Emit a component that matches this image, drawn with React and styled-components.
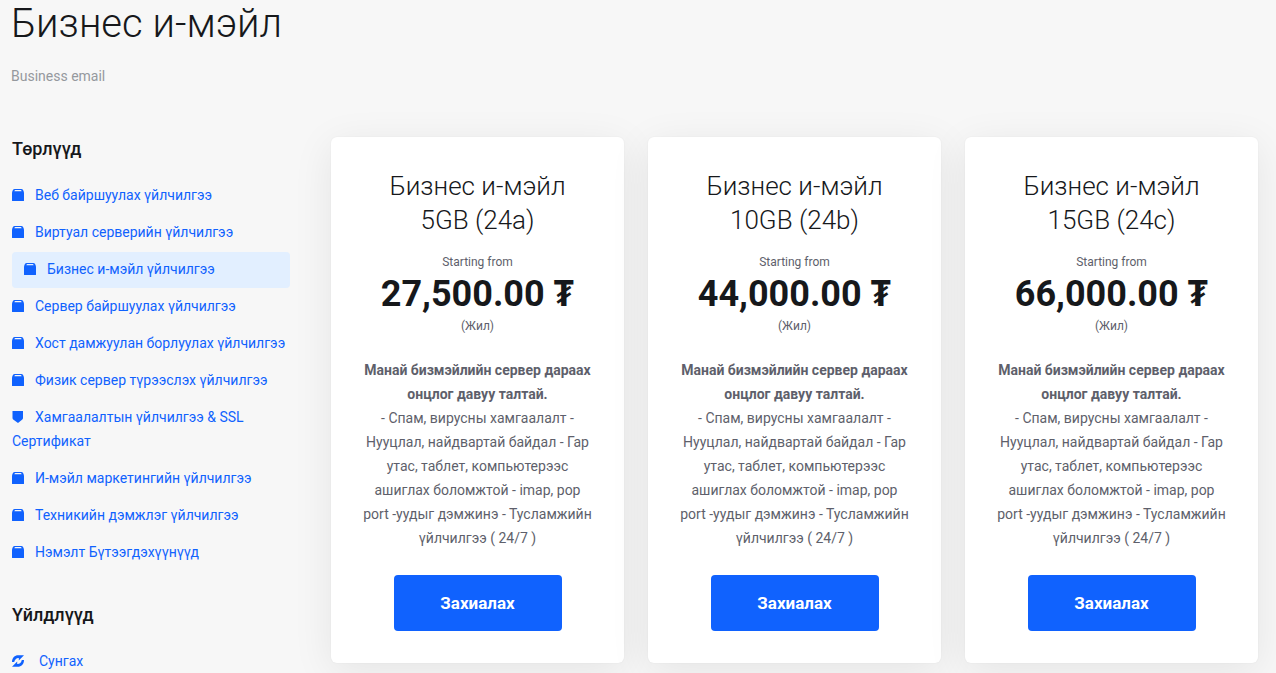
import React from 'react';
import styled, { createGlobalStyle } from 'styled-components';

const GlobalStyle = createGlobalStyle`
  * {
    box-sizing: border-box;
  }
  html {
    scrollbar-width: none;
  }
  body {
    margin: 0;
    background-color: #f7f7f7;
    color: #5e5f6b;
    font-family: Roboto, "Noto Sans", sans-serif;
    font-size: 14px;
    line-height: 24px;
  }
`;

const Page = styled.main`
  padding: 0 18px 10px 11px;
`;

const PageHeader = styled.header`
  padding-bottom: 49px;
`;

const PageTitle = styled.h1`
  margin: 0 0 16px;
  color: #16181b;
  font-size: 40px;
  font-weight: 300;
  line-height: 48px;
`;

const PageTagline = styled.p`
  margin: 0;
  color: #95999e;
`;

const Columns = styled.div`
  display: grid;
  grid-template-columns: 278px minmax(0, 1fr);
  column-gap: 41px;
  align-items: start;
  padding-left: 1px;
`;

const MenuSection = styled.section`
  margin-bottom: 32px;
`;

const MenuTitle = styled.h2`
  margin: 0 0 17px;
  color: #16181b;
  font-size: 18px;
  font-weight: 500;
  line-height: 24px;
`;

const MenuList = styled.ul`
  display: flex;
  flex-direction: column;
  gap: 1px;
  margin: 0;
  padding: 0;
  list-style: none;
`;

const MenuLink = styled.a`
  display: block;
  padding: 5px ${({ $active }) => ($active ? '12px' : '0')} 7px;
  border-radius: 4px;
  background-color: ${({ $active }) => ($active ? '#e2efff' : 'transparent')};
  color: #1062fe;
  text-decoration: none;

  svg {
    width: 12px;
    height: 12px;
    margin-right: ${({ $wide }) => ($wide ? '15px' : '11px')};
    vertical-align: -1px;
    fill: currentColor;
  }
`;

const Plans = styled.div`
  display: grid;
  grid-template-columns: repeat(3, minmax(0, 1fr));
  gap: 24px;
`;

const Card = styled.article`
  display: flex;
  flex-direction: column;
  align-items: center;
  padding: 32px;
  border-radius: 6px;
  background-color: #fff;
  box-shadow: 0 0 2px rgba(0, 0, 0, 0.06), 0 8px 40px rgba(0, 0, 0, 0.08);
  text-align: center;
`;

const PlanTitle = styled.h3`
  margin: 0 0 15px;
  padding: 0 24px;
  color: #16181b;
  font-size: 26px;
  font-weight: 300;
  line-height: 34px;
`;

const PriceNote = styled.span`
  font-size: 12px;
  line-height: 20px;
`;

const Price = styled.strong`
  color: #16181b;
  font-size: 36px;
  font-weight: 700;
  line-height: 44px;
  white-space: nowrap;
`;

const Description = styled.p`
  margin: 22px 0 25px;
`;

const OrderButton = styled.button`
  min-width: 168px;
  height: 56px;
  padding: 0 24px;
  border: 0;
  border-radius: 4px;
  background-color: #1062fe;
  color: #fff;
  font-family: inherit;
  font-size: 17px;
  font-weight: 700;
  cursor: pointer;
`;

const BoxIcon = () => (
  <svg viewBox="0 0 12 12" aria-hidden="true">
    <path
      fillRule="evenodd"
      d="M2.8 0H9.2Q10.6 0 11.2 1.2Q12 2.6 12 4V11.4Q12 12 11.4 12H.6Q0 12 0 11.4V4Q0 2.6.8 1.2Q1.4 0 2.8 0ZM3.4 1Q2.6 1 2.4 2.2H9.6Q9.4 1 8.6 1Z"
    />
  </svg>
);

const ShieldIcon = () => (
  <svg viewBox="0 0 12 12" aria-hidden="true">
    <path d="M.5 0H11V7Q11 8 10 8.8L6 12L1.5 8.8Q.5 8 .5 7Z" />
  </svg>
);

const RefreshIcon = () => (
  <svg viewBox="0 0 12 12" aria-hidden="true">
    <path d="M0 7C0 2.6 2.8.2 6.2.2H12L6.8 5.5V2.9C4.2 2.8 2.8 4.6 2.2 7Z" />
    <path d="M12 5C12 9.4 9.2 11.8 5.8 11.8H0L5.2 6.5V9.1C7.8 9.2 9.2 7.4 9.8 5Z" />
  </svg>
);

const categories = [
  { label: 'Веб байршуулах үйлчилгээ' },
  { label: 'Виртуал серверийн үйлчилгээ' },
  { label: 'Бизнес и-мэйл үйлчилгээ', active: true },
  { label: 'Сервер байршуулах үйлчилгээ' },
  { label: 'Хост дамжуулан борлуулах үйлчилгээ' },
  { label: 'Физик сервер түрээслэх үйлчилгээ' },
  { label: 'Хамгаалалтын үйлчилгээ & SSL Сертификат', Icon: ShieldIcon },
  { label: 'И-мэйл маркетингийн үйлчилгээ' },
  { label: 'Техникийн дэмжлэг үйлчилгээ' },
  { label: 'Нэмэлт Бүтээгдэхүүнүүд' },
];

const actions = [{ label: 'Сунгах', Icon: RefreshIcon, wide: true }];

const plans = [
  { name: 'Бизнес и-мэйл 5GB (24a)', price: '27,500.00 ₮' },
  { name: 'Бизнес и-мэйл 10GB (24b)', price: '44,000.00 ₮' },
  { name: 'Бизнес и-мэйл 15GB (24c)', price: '66,000.00 ₮' },
];

const Menu = ({ title, items }) => (
  <MenuSection>
    <MenuTitle>{title}</MenuTitle>
    <MenuList>
      {items.map(({ label, active, wide, Icon = BoxIcon }) => (
        <li key={label}>
          <MenuLink
            href="#"
            $active={active}
            $wide={wide}
            aria-current={active ? 'page' : undefined}
          >
            <Icon />
            {label}
          </MenuLink>
        </li>
      ))}
    </MenuList>
  </MenuSection>
);

const PlanCard = ({ name, price }) => (
  <Card>
    <PlanTitle>{name}</PlanTitle>
    <PriceNote>Starting from</PriceNote>
    <Price>{price}</Price>
    <PriceNote>(Жил)</PriceNote>
    <Description>
      <strong>Манай бизмэйлийн сервер дараах онцлог давуу талтай.</strong>
      <br />
      - Спам, вирусны хамгаалалт - Нууцлал, найдвартай байдал - Гар утас,
      таблет, компьютерээс ашиглах боломжтой - imap, pop port -уудыг дэмжинэ
      - Тусламжийн үйлчилгээ ( 24/7 )
    </Description>
    <OrderButton type="button">Захиалах</OrderButton>
  </Card>
);

const App = () => (
  <>
    <GlobalStyle />
    <Page>
      <PageHeader>
        <PageTitle>Бизнес и-мэйл</PageTitle>
        <PageTagline>Business email</PageTagline>
      </PageHeader>
      <Columns>
        <nav>
          <Menu title="Төрлүүд" items={categories} />
          <Menu title="Үйлдлүүд" items={actions} />
        </nav>
        <Plans>
          {plans.map((plan) => (
            <PlanCard key={plan.name} {...plan} />
          ))}
        </Plans>
      </Columns>
    </Page>
  </>
);

export default App;
